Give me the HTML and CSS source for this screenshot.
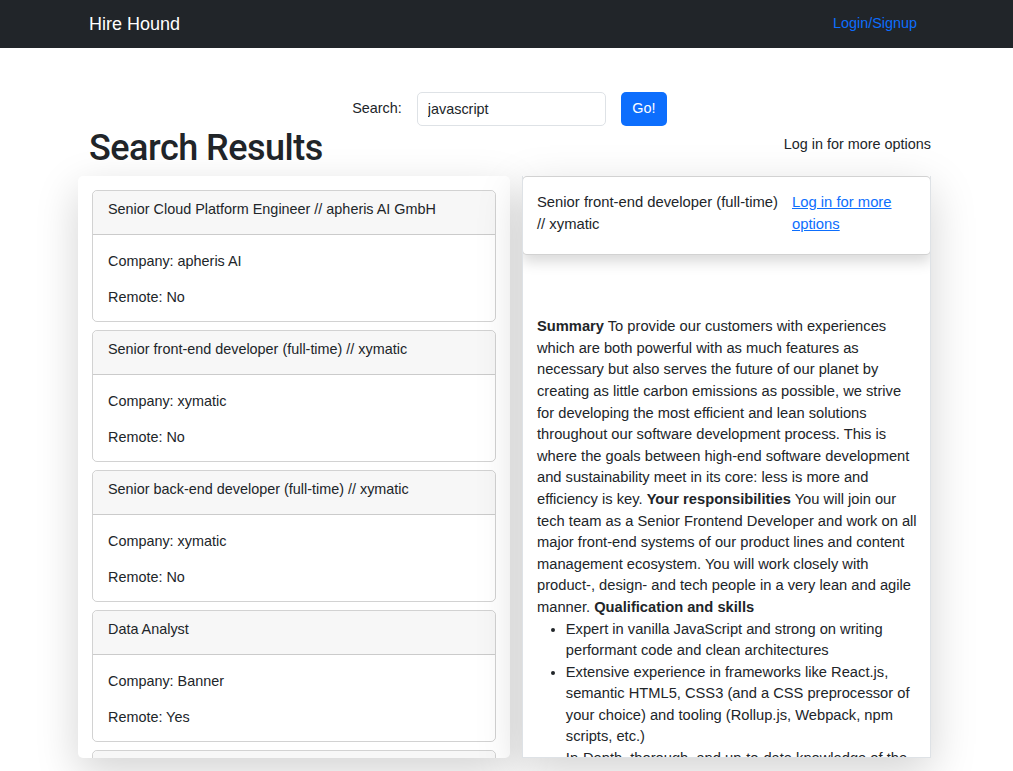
FILE: index.html
```html
<!DOCTYPE html>
<html lang="en">
<head>
<meta charset="utf-8">
<title>Hire Hound</title>
<link rel="stylesheet" href="styles.css">
</head>
<body>
<nav class="navbar">
  <div class="nav-inner">
    <a class="brand" href="#">Hire Hound</a>
    <a class="nav-link" href="#">Login/Signup</a>
  </div>
</nav>

<main class="container">
  <form class="search-form">
    <label class="search-label" for="q">Search:</label>
    <input class="search-input" id="q" type="text" value="javascript">
    <button class="btn-go" type="button">Go!</button>
  </form>

  <div class="heading-row">
    <h1 class="page-title">Search Results</h1>
    <span class="more-options">Log in for more options</span>
  </div>

  <div class="results-row">
    <section class="list-panel">
      <div class="job-card">
        <div class="job-header"><p>Senior Cloud Platform Engineer // apheris AI GmbH</p></div>
        <div class="job-body"><p>Company: apheris AI</p><p>Remote: No</p></div>
      </div>
      <div class="job-card">
        <div class="job-header"><p>Senior front-end developer (full-time) // xymatic</p></div>
        <div class="job-body"><p>Company: xymatic</p><p>Remote: No</p></div>
      </div>
      <div class="job-card">
        <div class="job-header"><p>Senior back-end developer (full-time) // xymatic</p></div>
        <div class="job-body"><p>Company: xymatic</p><p>Remote: No</p></div>
      </div>
      <div class="job-card">
        <div class="job-header"><p>Data Analyst</p></div>
        <div class="job-body"><p>Company: Banner</p><p>Remote: Yes</p></div>
      </div>
      <div class="job-card">
        <div class="job-header"><p>Frontend Engineer</p></div>
        <div class="job-body"><p>Company: Example</p><p>Remote: Yes</p></div>
      </div>
    </section>

    <section class="detail-panel">
      <div class="detail-head">
        <div class="detail-title">Senior front-end developer (full-time) // xymatic</div>
        <a class="detail-link" href="#">Log in for more options</a>
      </div>
      <div class="detail-body">
        <p><strong>Summary</strong> To provide our customers with experiences which are both powerful with as much features as necessary but also serves the future of our planet by creating as little carbon emissions as possible, we strive for developing the most efficient and lean solutions throughout our software development process. This is where the goals between high-end software development and sustainability meet in its core: less is more and efficiency is key. <strong>Your responsibilities</strong> You will join our tech team as a Senior Frontend Developer and work on all major front-end systems of our product lines and content management ecosystem. You will work closely with product-, design- and tech people in a very lean and agile manner. <strong>Qualification and skills</strong></p>
        <ul>
          <li>Expert in vanilla JavaScript and strong on writing performant code and clean architectures</li>
          <li>Extensive experience in frameworks like React.js, semantic HTML5, CSS3 (and a CSS preprocessor of your choice) and tooling (Rollup.js, Webpack, npm scripts, etc.)</li>
          <li>In-Depth, thorough, and up-to-date knowledge of the latest web standards and browser APIs</li>
          <li>Experience with testing and continuous integration</li>
        </ul>
      </div>
    </section>
  </div>
</main>
</body>
</html>
```

FILE: styles.css
```css
* { box-sizing: border-box; }

html, body { height: 100%; }

body {
  margin: 0;
  font-family: "Liberation Sans", Arial, sans-serif;
  font-size: 14.4px;
  line-height: 1.5;
  color: #212529;
  background: #fff;
  overflow: hidden;
}

a { color: #0d6efd; text-decoration: none; }

.navbar {
  background: #212529;
  height: 48px;
}

.nav-inner {
  width: 835px;
  margin: 0 auto;
  height: 48px;
  display: flex;
  align-items: center;
  justify-content: space-between;
}

.brand {
  color: #fff;
  font-size: 18px;
  line-height: 27px;
}

.nav-link {
  font-size: 14.4px;
  padding: 0 7px;
}

.container {
  width: 835px;
  margin: 0 auto;
}

.search-form {
  display: flex;
  align-items: center;
  justify-content: center;
  gap: 15px;
  margin: 44px 0 0 6px;
  height: 33px;
}

.search-label { font-size: 14.4px; }

.search-input {
  width: 189px;
  height: 34px;
  border: 1px solid #dee2e6;
  border-radius: 5px;
  padding: 0 10px;
  font: inherit;
  color: #212529;
}

.btn-go {
  width: 46px;
  height: 34px;
  border: 0;
  border-radius: 5px;
  background: #0d6efd;
  color: #fff;
  font: inherit;
  padding: 0;
}

.heading-row {
  display: flex;
  justify-content: space-between;
  align-items: flex-start;
  margin-right: -7px;
  height: 51px;
}

.page-title {
  margin: 2px 0 0;
  font-family: Roboto, "Liberation Sans", sans-serif;
  font-size: 36px;
  font-weight: 500;
  letter-spacing: -0.5px;
  line-height: 43px;
}

.more-options {
  margin-top: 9px;
}

.results-row {
  display: flex;
  gap: 12px;
  margin-left: -11px;
  height: 582px;
}

.list-panel {
  width: 432px;
  flex: none;
  background: #fff;
  border-radius: 5px;
  box-shadow: 0 14px 43px rgba(0, 0, 0, .175);
  padding: 14px;
  overflow: hidden;
  display: flex;
  flex-direction: column;
  gap: 8px;
}

.job-card {
  flex: none;
  border: 1px solid rgba(0, 0, 0, .175);
  border-radius: 5px;
}

.job-header {
  background: #f7f7f7;
  border-bottom: 1px solid rgba(0, 0, 0, .175);
  border-radius: 5px 5px 0 0;
  padding: 8px 15px 7px;
}

.job-header p { margin: 0 0 6.4px; }

.job-body {
  padding: 16px 15px 12.4px;
}

.job-body p { margin: 0 0 14.4px; }
.job-body p:last-child { margin-bottom: 0; }

.detail-panel {
  width: 409px;
  flex: none;
  border: 1px solid #dee2e6;
  border-top: 0;
  box-shadow: 0 14px 43px rgba(0, 0, 0, .175);
  overflow: hidden;
  background: #fff;
  font-size: 14.8px;
  line-height: 21.6px;
}

.detail-head {
  display: grid;
  grid-template-columns: 1fr 124px;
  gap: 8px;
  margin: 0 -1px;
  padding: 15px 14px 19px;
  border: 1px solid rgba(0, 0, 0, .175);
  border-radius: 5px;
  background: #fff;
  box-shadow: 0 7px 14px rgba(0, 0, 0, .15);
}

.detail-link { text-decoration: underline; }

.detail-body {
  padding: 61px 11px 0 14px;
  font-size: 14.7px;
}

.detail-body p { margin: 0; }

.detail-body ul {
  margin: 0;
  padding-left: 28.8px;
}
```
